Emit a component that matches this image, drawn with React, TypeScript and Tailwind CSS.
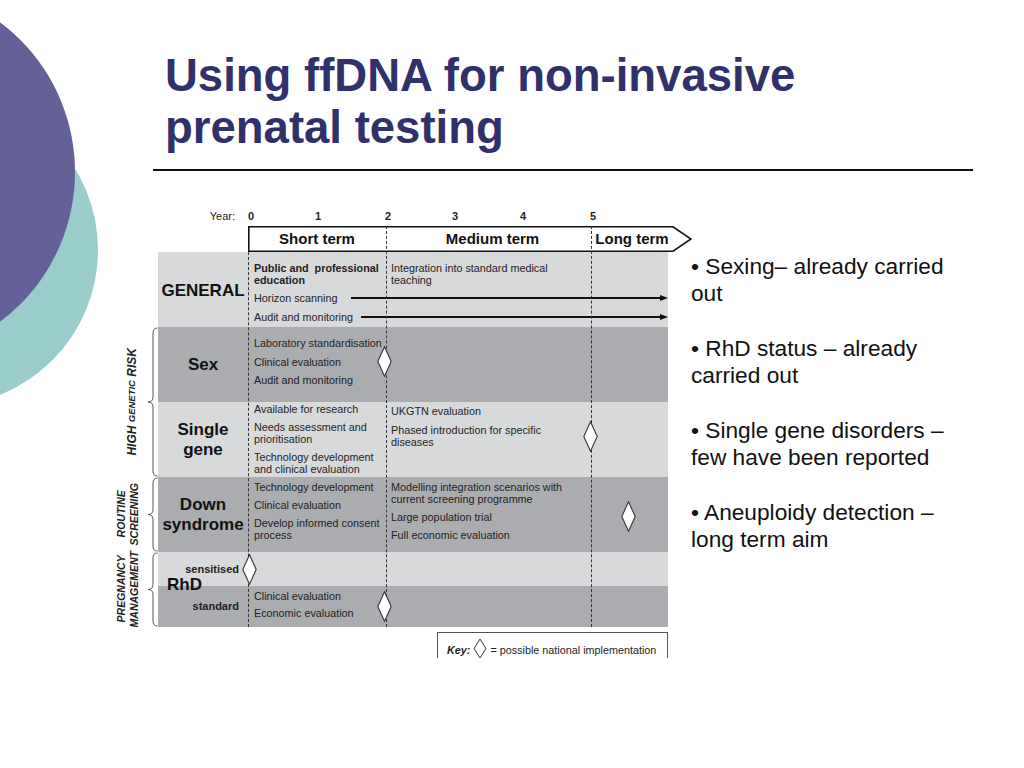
const cell = "text-[10.8px] leading-[12px] text-[#1e1e1e]";

function Diamond({ className }: { className: string }) {
  return (
    <svg width="15" height="31" viewBox="0 0 15 31" className={className}>
      <path d="M7.5 0.8 L14.2 15.5 L7.5 30.2 L0.8 15.5 Z" fill="white" stroke="#333" strokeWidth="1.1" />
    </svg>
  );
}

function Brace({ h }: { h: number }) {
  const m = h / 2;
  return (
    <svg width="12" height={h} viewBox={`0 0 12 ${h}`} className="shrink-0">
      <path
        d={`M11.5 1 Q7 1 7 6 L7 ${m - 5} Q7 ${m} 2 ${m} Q7 ${m} 7 ${m + 5} L7 ${h - 6} Q7 ${h - 1} 11.5 ${h - 1}`}
        fill="none"
        stroke="#555"
        strokeWidth="1"
      />
    </svg>
  );
}

function Arrow({ gap }: { gap: string }) {
  return (
    <div className={`flex flex-1 items-center ${gap}`}>
      <div className="h-[1.3px] flex-1 bg-[#111]" />
      <div className="h-0 w-0 border-y-[3px] border-l-[8px] border-y-transparent border-l-[#111]" />
    </div>
  );
}

function Label({ children }: { children: React.ReactNode }) {
  return (
    <div className="flex w-[90px] shrink-0 items-center justify-center text-center text-[17px] font-bold leading-[20px] text-[#111]">
      {children}
    </div>
  );
}

function Diagram() {
  return (
    <div className="relative w-[582px] shrink-0">
      {/* year scale */}
      <div className="flex h-[19px] items-center text-[11px] text-[#222]">
        <div className="w-[138px] pr-[13px] text-right">Year:</div>
        <span className="w-[67px] font-bold">0</span>
        <span className="w-[70px] font-bold">1</span>
        <span className="w-[67px] font-bold">2</span>
        <span className="w-[68px] font-bold">3</span>
        <span className="w-[70px] font-bold">4</span>
        <span className="font-bold">5</span>
      </div>

      {/* term header */}
      <div className="flex h-[26px]">
        <div className="w-[138px]" />
        <div className="relative h-[26px] w-[444px]">
          <svg width="444" height="26" viewBox="0 0 444 26" className="absolute inset-0">
            <polygon points="0.8,0.8 425,0.8 443,13 425,25.2 0.8,25.2" fill="white" stroke="#111" strokeWidth="1.6" />
          </svg>
          <div className="relative flex h-full items-center text-[15px] font-bold text-[#111]">
            <div className="w-[138px] text-center">Short term</div>
            <div className="w-[205px] pl-[8px] text-center">Medium term</div>
            <div className="w-[82px] text-center">Long term</div>
          </div>
        </div>
      </div>

      {/* body */}
      <div className="flex">
        <div className="flex w-[48px] shrink-0 flex-col">
          <div className="h-[75px]" />
          <div className="flex h-[150px]">
            <div className="flex flex-1 items-center justify-center pl-[8px]">
              <div className="rotate-180 text-[12px] font-bold italic leading-[13px] text-[#222] [writing-mode:vertical-rl]">
                HIGH <span className="text-[9.5px]">GENETIC</span> RISK
              </div>
            </div>
            <Brace h={150} />
          </div>
          <div className="flex h-[75px]">
            <div className="flex flex-1 items-center justify-center">
              <div className="rotate-180 text-center text-[10.5px] font-bold italic leading-[13px] text-[#222] [writing-mode:vertical-rl]">
                ROUTINE
                <br />
                SCREENING
              </div>
            </div>
            <Brace h={75} />
          </div>
          <div className="flex h-[75px]">
            <div className="flex flex-1 items-center justify-center">
              <div className="rotate-180 text-center text-[10.5px] font-bold italic leading-[13px] text-[#222] [writing-mode:vertical-rl]">
                PREGNANCY
                <br />
                MANAGEMENT
              </div>
            </div>
            <Brace h={75} />
          </div>
        </div>

        <div className="flex w-[510px] flex-col">
          {/* GENERAL */}
          <div className="flex h-[75px] bg-[#d8d9db]">
            <Label>
              <span className="pt-[3px]">GENERAL</span>
            </Label>
            <div className="flex w-[420px] flex-col pt-[10px]">
              <div className="flex">
                <div className={`w-[138px] pl-[6px] font-bold ${cell}`}>
                  Public and&nbsp; professional
                  <br />
                  education
                </div>
                <div className={`w-[205px] pl-[5px] ${cell}`}>
                  Integration into standard medical
                  <br />
                  teaching
                </div>
              </div>
              <div className={`mt-[6px] flex items-center pl-[6px] ${cell}`}>
                <span>Horizon scanning</span>
                <Arrow gap="ml-[14px]" />
              </div>
              <div className={`mt-[7px] flex items-center pl-[6px] ${cell}`}>
                <span>Audit and monitoring</span>
                <Arrow gap="ml-[8px]" />
              </div>
            </div>
          </div>

          {/* Sex */}
          <div className="flex h-[75px] bg-[#abacaf]">
            <Label>Sex</Label>
            <div className={`flex w-[138px] flex-col gap-[6.5px] pl-[6px] pt-[10px] ${cell}`}>
              <div>Laboratory standardisation</div>
              <div>Clinical evaluation</div>
              <div>Audit and monitoring</div>
            </div>
          </div>

          {/* Single gene */}
          <div className="flex h-[75px] bg-[#d8d9db]">
            <Label>
              Single
              <br />
              gene
            </Label>
            <div className={`flex w-[138px] flex-col gap-[6px] pl-[6px] pt-[1px] ${cell}`}>
              <div>Available for research</div>
              <div>
                Needs assessment and
                <br />
                prioritisation
              </div>
              <div>
                Technology development
                <br />
                and clinical evaluation
              </div>
            </div>
            <div className={`flex w-[205px] flex-col gap-[7px] pl-[5px] pt-[3px] ${cell}`}>
              <div>UKGTN evaluation</div>
              <div>
                Phased introduction for specific
                <br />
                diseases
              </div>
            </div>
          </div>

          {/* Down syndrome */}
          <div className="flex h-[75px] bg-[#abacaf]">
            <Label>
              Down
              <br />
              syndrome
            </Label>
            <div className={`flex w-[138px] flex-col gap-[6px] pl-[6px] pt-[4px] ${cell}`}>
              <div>Technology development</div>
              <div>Clinical evaluation</div>
              <div>
                Develop informed consent
                <br />
                process
              </div>
            </div>
            <div className={`flex w-[205px] flex-col gap-[6px] pl-[5px] pt-[4px] ${cell}`}>
              <div>
                Modelling integration scenarios with
                <br />
                current screening programme
              </div>
              <div>Large population trial</div>
              <div>Full economic evaluation</div>
            </div>
          </div>

          {/* RhD */}
          <div className="relative flex flex-col">
            <div className="flex h-[34px] bg-[#d8d9db]">
              <div className="flex w-[90px] items-center justify-end pr-[9px] text-[11px] font-bold text-[#222]">
                sensitised
              </div>
            </div>
            <div className="flex h-[41px] bg-[#abacaf]">
              <div className="flex w-[90px] items-center justify-end pr-[9px] text-[11px] font-bold text-[#222]">
                standard
              </div>
              <div className={`flex w-[138px] flex-col gap-[5px] pl-[6px] pt-[4px] ${cell}`}>
                <div>Clinical evaluation</div>
                <div>Economic evaluation</div>
              </div>
            </div>
            <div className="absolute left-[9px] top-[23px] text-[17px] font-bold leading-[20px] text-[#111]">RhD</div>
          </div>

          {/* key */}
          <div className="ml-[279px] mt-[5px] flex h-[26px] w-[231px] items-end gap-[3px] border border-b-0 border-[#555] pb-[2px] pl-[9px] text-[10.8px] leading-[12px] text-[#1e1e1e]">
            <span className="font-bold italic">Key:</span>
            <svg width="14" height="20" viewBox="0 0 14 20" className="-mb-[2px]">
              <path d="M7 1 L13 10.5 L7 20 L1 10.5 Z" fill="white" stroke="#333" strokeWidth="1" />
            </svg>
            <span>= possible national implementation</span>
          </div>
        </div>
      </div>

      {/* dashed year markers */}
      <div className="absolute left-[138px] top-[45px] h-[375px] border-l-[1.5px] border-dashed border-[#333]" />
      <div className="absolute left-[276px] top-[19px] h-[401px] border-l-[1.5px] border-dashed border-[#333]" />
      <div className="absolute left-[481px] top-[19px] h-[401px] border-l-[1.5px] border-dashed border-[#333]" />

      {/* implementation points */}
      <Diamond className="absolute left-[267px] top-[139px]" />
      <Diamond className="absolute left-[473px] top-[214px]" />
      <Diamond className="absolute left-[511px] top-[294px]" />
      <Diamond className="absolute left-[132px] top-[347px]" />
      <Diamond className="absolute left-[267px] top-[384px]" />
    </div>
  );
}

export default function App() {
  return (
    <div className="relative h-[768px] w-[1024px] overflow-hidden bg-white font-['Liberation_Sans',Arial,sans-serif]">
      <div className="absolute left-[-214px] top-[94px] h-[312px] w-[312px] rounded-full bg-[#99cccb]" />
      <div className="absolute left-[-299px] top-[-15px] h-[374px] w-[374px] rounded-full bg-[#646199]" />

      <div className="relative">
        <h1 className="ml-[165px] pt-[50px] text-[45.5px] font-bold leading-[52px] text-[#30306a]">
          Using ffDNA for non-invasive
          <br />
          prenatal testing
        </h1>
        <div className="ml-[153px] mt-[15px] h-[2px] w-[820px] bg-[#111]" />

        <div className="mt-[36px] flex items-start pl-[110px]">
          <Diagram />
          <div className="ml-[-1px] mt-[46px] w-[272px] text-[22.7px] leading-[27.3px] text-[#111]">
            <p className="mb-[27.3px]">• Sexing– already carried out</p>
            <p className="mb-[27.3px]">• RhD status – already carried out</p>
            <p className="mb-[27.3px]">• Single gene disorders – few have been reported</p>
            <p>• Aneuploidy detection – long term aim</p>
          </div>
        </div>
      </div>
    </div>
  );
}
